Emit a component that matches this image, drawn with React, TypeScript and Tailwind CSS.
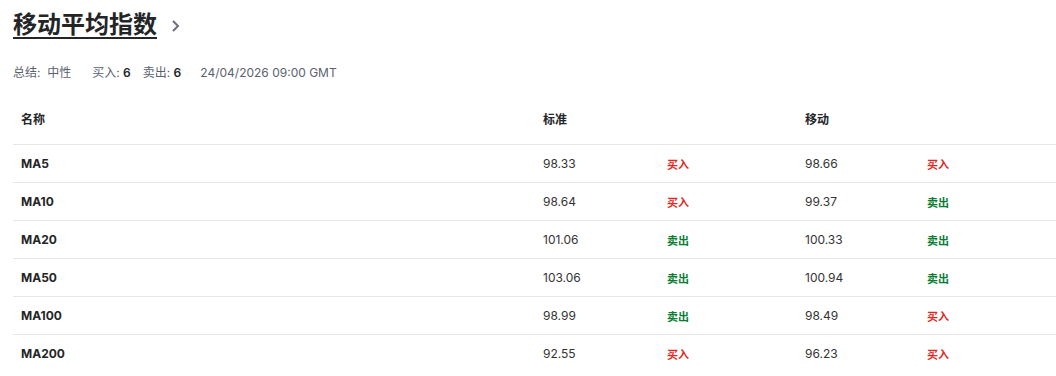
const rows = [
  { name: "MA5", std: "98.33", stdSig: "买入", mov: "98.66", movSig: "买入" },
  { name: "MA10", std: "98.64", stdSig: "买入", mov: "99.37", movSig: "卖出" },
  { name: "MA20", std: "101.06", stdSig: "卖出", mov: "100.33", movSig: "卖出" },
  { name: "MA50", std: "103.06", stdSig: "卖出", mov: "100.94", movSig: "卖出" },
  { name: "MA100", std: "98.99", stdSig: "卖出", mov: "98.49", movSig: "买入" },
  { name: "MA200", std: "92.55", stdSig: "买入", mov: "96.23", movSig: "买入" },
];

const Signal = ({ value }: { value: string }) => (
  <span className={`text-[11px] font-semibold ${value === "买入" ? "text-[#e0281e]" : "text-[#0a7d32]"}`}>{value}</span>
);

const App = () => {
  return (
    <div className="bg-white w-[1056px] h-[376px] overflow-hidden pl-[13px] text-[#232526] font-['Inter','Noto_Sans_CJK_SC',sans-serif]">
      {/* Title */}
      <div className="flex items-center pt-[7px] h-[42px]">
        <h2 className="text-[24px] leading-[32px] font-bold underline decoration-2 underline-offset-[4px]">移动平均指数</h2>
        <svg className="ml-[13px] mt-[2px]" width="12" height="14" viewBox="0 0 12 14" fill="none">
          <path d="M3 2l5 5-5 5" stroke="#6a707c" strokeWidth="2" />
        </svg>
      </div>

      {/* Summary */}
      <div className="flex items-center gap-[12px] mt-[23px] h-[16px] text-[12px] text-[#5b616e]">
        <span>总结:&nbsp;&nbsp;中性</span>
        <span className="ml-[9px]">买入: <b className="font-semibold text-[#232526]">6</b></span>
        <span>卖出: <b className="font-semibold text-[#232526]">6</b></span>
        <span className="ml-[7px]">24/04/2026 09:00 GMT</span>
      </div>

      {/* Table */}
      <table className="mt-[15px] w-[1043px] table-fixed border-collapse text-[12px]">
        <colgroup>
          <col className="w-[522px]" />
          <col className="w-[124px]" />
          <col className="w-[138px]" />
          <col className="w-[122px]" />
          <col />
        </colgroup>
        <thead>
          <tr className="h-[48px] text-left">
            <th className="px-[8px] font-semibold">名称</th>
            <th className="px-[8px] font-semibold">标准</th>
            <th />
            <th className="px-[8px] font-semibold">移动</th>
            <th />
          </tr>
        </thead>
        <tbody>
          {rows.map((r) => (
            <tr key={r.name} className="h-[38px] border-t border-[#e4e6ea]">
              <td className="px-[8px] pt-[1px] font-bold">{r.name}</td>
              <td className="px-[8px] pt-[1px] text-[#333]">{r.std}</td>
              <td className="px-[8px] pt-[3px]"><Signal value={r.stdSig} /></td>
              <td className="px-[8px] pt-[1px] text-[#333]">{r.mov}</td>
              <td className="px-[8px] pt-[3px]"><Signal value={r.movSig} /></td>
            </tr>
          ))}
        </tbody>
      </table>
    </div>
  );
};

export default App;
